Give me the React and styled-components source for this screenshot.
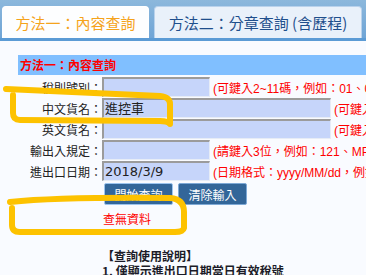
import React from 'react';
import styled, { createGlobalStyle } from 'styled-components';

const GlobalStyle = createGlobalStyle`
    html, body {
        margin: 0;
        padding: 0;
        background: #f9fbff;
        overflow: hidden;
    }
    body {
        font-family: "DejaVu Sans", "Noto Sans CJK TC", sans-serif;
        font-size: 12px;
        color: #222;
    }
`;

const Page = styled.div`
    position: relative;
    width: 366px;
    height: 275px;
    overflow: hidden;
`;

const TabBar = styled.div`
    display: flex;
    gap: 5px;
    height: 32px;
    padding: 6px 0 0 2px;
    background: linear-gradient(#8cb8dc, #6fa5d6);
    border-bottom: 3px solid #5b9bd5;
`;

const Tab = styled.div`
    display: flex;
    align-items: center;
    justify-content: center;
    width: ${p => p.$width}px;
    height: 32px;
    box-sizing: border-box;
    border-radius: 4px 4px 0 0;
    border: 1px solid ${p => (p.$active ? '#ffffff' : '#b9d2ec')};
    border-bottom: none;
    background: ${p => (p.$active ? '#fdfeff' : '#e9f1fa')};
    color: ${p => (p.$active ? '#f5a31c' : '#1f4f8c')};
    font-family: "Noto Sans CJK TC", sans-serif;
    font-size: 15px;
    white-space: nowrap;
`;

const Section = styled.div`
    margin: 14px 0 0 18px;
    width: 620px;
`;

const Header = styled.div`
    height: 20px;
    line-height: 20px;
    padding-left: 2px;
    background: #80bfff;
    color: #ff0000;
    font-family: "Noto Sans CJK TC", sans-serif;
    font-weight: bold;
    font-size: 12px;
`;

const Form = styled.div`
    display: flex;
    flex-direction: column;
    gap: 1px;
    margin-top: 2px;
`;

const Row = styled.div`
    display: flex;
    align-items: center;
    height: 20px;
`;

const Label = styled.div`
    width: 84px;
    text-align: right;
    font-family: "Noto Sans CJK TC", sans-serif;
    font-size: 12px;
    color: #222;
    white-space: nowrap;
`;

const Field = styled.div`
    width: ${p => (p.$long ? 229 : 108)}px;
    height: 20px;
    box-sizing: border-box;
    border-top: 2px solid #9b9b9b;
    border-left: 2px solid #9b9b9b;
    border-right: 1px solid #e6ecf6;
    border-bottom: 1px solid #e6ecf6;
    background: #c6d5fa;
    padding-left: 1px;
    font-size: 13px;
    line-height: 17px;
    color: #222;
    white-space: nowrap;
`;

const Hint = styled.div`
    margin-left: 3px;
    color: #ff0000;
    font-family: "Liberation Sans", "Noto Sans CJK TC", sans-serif;
    font-size: 12px;
    white-space: nowrap;
`;

const Buttons = styled.div`
    display: flex;
    gap: 5px;
    margin: 2px 0 0 86px;
`;

const Button = styled.button`
    width: 69px;
    height: 22px;
    padding: 0;
    border: 1px solid ${p => (p.$focus ? '#9cc4ee' : '#7ea9d6')};
    border-radius: 2px;
    background: #336699;
    color: #fff;
    font-family: "Noto Sans CJK TC", sans-serif;
    font-size: 12px;
    cursor: pointer;
`;

const NoData = styled.div`
    margin: 5px 0 0 85px;
    color: #ff0000;
    font-family: "Noto Sans CJK TC", sans-serif;
    font-size: 12px;
`;

const Notes = styled.div`
    margin: 21px 0 0 84px;
    font-family: "Noto Sans CJK TC", sans-serif;
    font-weight: bold;
    font-size: 12px;
    line-height: 15px;
    color: #1c1c28;
`;

const NoteLine = styled.div`
    height: 15px;
    overflow: visible;
`;

const Marker = styled.svg`
    position: absolute;
    left: 0;
    top: 0;
    pointer-events: none;
`;

const rows = [
    { label: '稅則號別：', hint: '(可鍵入2~11碼，例如：01、0101、010121、01012100008)' },
    { label: '中文貨名：', value: '進控車', long: true, hint: '(可鍵入中文)' },
    { label: '英文貨名：', long: true, hint: '(可鍵入英文)' },
    { label: '輸出入規定：', hint: '(請鍵入3位，例如：121、MP1)' },
    { label: '進出口日期：', value: '2018/3/9', hint: '(日期格式：yyyy/MM/dd，例如：2018/3/9)' },
];

const App = () => {
    return (
        <Page>
            <GlobalStyle />
            <TabBar>
                <Tab $active $width={147}>方法一：內容查詢</Tab>
                <Tab $width={208}>方法二：分章查詢 (含歷程)</Tab>
            </TabBar>
            <Section>
                <Header>方法一：內容查詢</Header>
                <Form>
                    {rows.map(r => (
                        <Row key={r.label}>
                            <Label>{r.label}</Label>
                            <Field $long={r.long}>{r.value}</Field>
                            <Hint>{r.hint}</Hint>
                        </Row>
                    ))}
                </Form>
                <Buttons>
                    <Button $focus>開始查詢</Button>
                    <Button>清除輸入</Button>
                </Buttons>
                <NoData>查無資料</NoData>
                <Notes>
                    <NoteLine>【查詢使用說明】</NoteLine>
                    <NoteLine>1. 僅顯示進出口日期當日有效稅號</NoteLine>
                </Notes>
            </Section>
            <Marker width="366" height="275" viewBox="0 0 366 275">
                <g fill="none" stroke="#fdc200" strokeWidth="6" strokeLinecap="round" strokeLinejoin="round">
                    <path d="M 6 89 L 160 96 Q 170 97 170 104 L 170 124 Q 168 121 160 121 L 20 120 Q 13 120 13 113 L 13 95" />
                    <path d="M 10 202 Q 60 197 170 198 Q 184 199 184 212 L 184 228 Q 183 232 175 232 L 20 232 Q 12 232 12 225 L 12 208" />
                </g>
            </Marker>
        </Page>
    );
};

export default App;
